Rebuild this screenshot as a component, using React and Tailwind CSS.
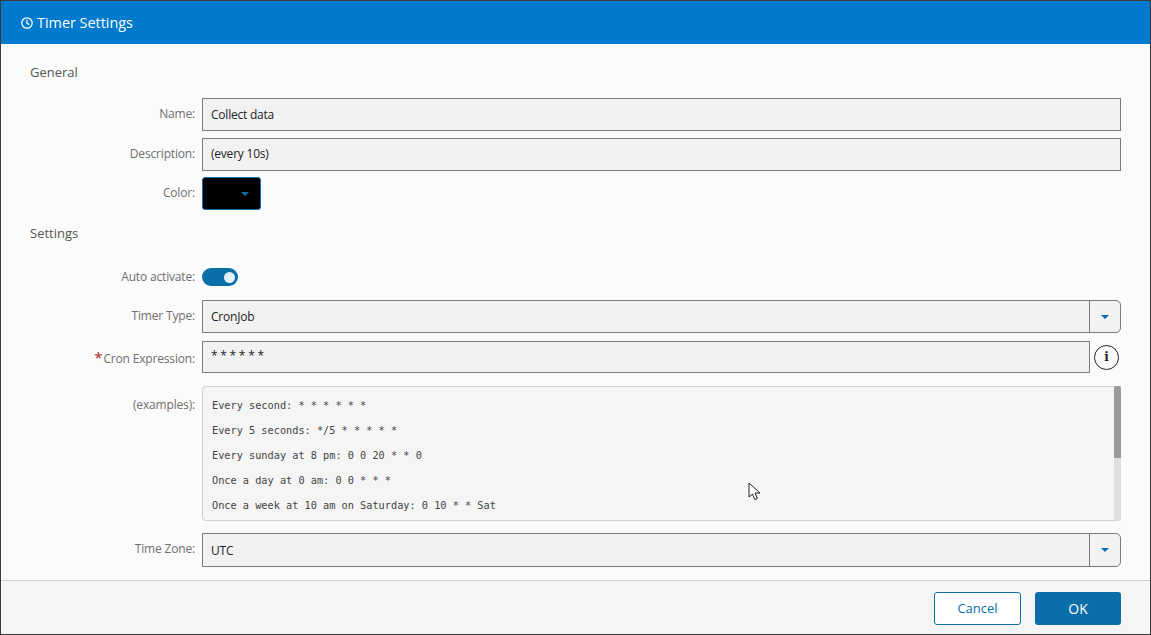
import React from "react";

const Caret = ({ className = "" }) => (
  <svg width="10" height="6" viewBox="0 0 10 6" className={className}><path d="M0 0.5h10L5 5.5z" fill="#0a6ea8" /></svg>
);

const Row = ({ label, required, top, children, className = "" }) => (
  <div className={`flex ${className}`}>
    <div className={`w-[194px] shrink-0 text-right text-[12px] tracking-[-0.17px] leading-[16px] text-[#6f6f6f] ${top}`}>
      {required && <span className="text-[#a4262c] text-[15px] leading-[10px] mr-[1px]">*</span>}
      {label}
    </div>
    <div className="ml-[7px] flex-1 min-w-0">{children}</div>
  </div>
);

const inputCls = "w-full border border-[#7a7a7a] bg-[#f2f2f2] pl-2 text-[12px] tracking-[-0.22px] text-[#222] flex items-center";

const Select = ({ value, h, textCls = "" }) => (
  <div className={`flex border border-[#7a7a7a] rounded-r-[5px] bg-[#f2f2f2] ${h}`}>
    <div className={`flex-1 pl-2 flex items-center text-[12px] tracking-[-0.22px] text-[#222] ${textCls}`}>{value}</div>
    <div className="w-[31px] border-l border-[#7a7a7a] flex items-center justify-center"><Caret className="w-[8px]" /></div>
  </div>
);

const examples = [
  "Every second: * * * * * *",
  "Every 5 seconds: */5 * * * * *",
  "Every sunday at 8 pm: 0 0 20 * * 0",
  "Once a day at 0 am: 0 0 * * *",
  "Once a week at 10 am on Saturday: 0 10 * * Sat",
];

export default function App() {
  return (
    <div className="relative w-[1151px] h-[635px] overflow-hidden border border-[#3a3a3a] bg-[#fbfbfb] flex flex-col font-['Open_Sans',sans-serif]">
      <div className="h-[43px] shrink-0 bg-[#007acc] flex items-center pl-[20px] text-white text-[14.4px]">
        <svg width="12" height="12" viewBox="0 0 12 12" fill="none" stroke="white" strokeWidth="1.3" className="mr-[4px]">
          <circle cx="6" cy="6" r="5.2" />
          <path d="M6 2.8V6.2L8.2 7.6" />
        </svg>
        Timer Settings
      </div>

      <div className="flex-1 min-h-0 pl-[29px] pr-[29px]">
        <div className="h-[54px] pt-[19px] text-[13px] leading-[18px] text-[#555]">General</div>

        <Row label="Name:" top="pt-[8px]" className="-ml-[29px]">
          <div className={`${inputCls} h-[33px]`}>Collect data</div>
        </Row>
        <Row label="Description:" top="pt-[8px]" className="-ml-[29px] mt-[7px]">
          <div className={`${inputCls} h-[33px]`}><span className="-mt-[1px]">(every 10s)</span></div>
        </Row>
        <Row label="Color:" top="pt-[8px]" className="-ml-[29px] mt-[6px]">
          <div className="w-[59px] h-[33px] bg-black border border-[#0a6ea8] rounded-[3px] flex items-center justify-end pr-[11px]">
            <Caret className="w-[8px]" />
          </div>
        </Row>

        <div className="h-[58px] pt-[14px] text-[13px] leading-[18px] text-[#555]">Settings</div>

        <Row label="Auto activate:" top="pt-[1px]" className="-ml-[29px]">
          <div className="w-[36px] h-[18px] rounded-full bg-[#0a6ea8] flex items-center justify-end pr-[3px]">
            <div className="w-[11px] h-[11px] rounded-full bg-[#e6f0f7]" />
          </div>
        </Row>
        <Row label="Timer Type:" top="pt-[8px]" className="-ml-[29px] mt-[14px]">
          <Select value="CronJob" h="h-[33px]" />
        </Row>
        <Row label="Cron Expression:" required top="pt-[10px]" className="-ml-[29px] mt-[8px]">
          <div className="flex items-center">
            <div className={`${inputCls} h-[32px] flex-1 min-w-0`}><span className="-mt-[3px]">* * * * * *</span></div>
            <div className="ml-[4px] mr-[2px] w-[25px] h-[25px] rounded-full border border-[#222] flex items-center justify-center text-[12px] font-bold text-[#222] font-['DejaVu_Serif',serif]">i</div>
          </div>
        </Row>
        <Row label="(examples):" top="pt-[11px]" className="-ml-[29px] mt-[13px]">
          <div className="relative h-[135px] border border-[#cfcfcf] rounded-[4px] bg-[#f5f5f5] pl-[9px] pt-[11px] font-['DejaVu_Sans_Mono',monospace] text-[10.25px] leading-[15px] text-[#444]">
            {examples.map((e) => (
              <div key={e} className="mb-[10px] whitespace-pre">{e}</div>
            ))}
            <div className="absolute -right-[1px] -top-[1px] -bottom-[1px] w-[7px] bg-[#dedede] rounded-[2px] overflow-hidden">
              <div className="h-[72px] bg-[#9a9a9a]" />
            </div>
          </div>
        </Row>
        <Row label="Time Zone:" top="pt-[8px]" className="-ml-[29px] mt-[12px]">
          <Select value="UTC" h="h-[34px]" textCls="pt-[1px]" />
        </Row>
      </div>

      <div className="h-[54px] shrink-0 border-t border-[#d0d0d0] bg-[#f5f5f5] flex justify-end items-start pt-[11px] pr-[29px] text-[14px]">
        <div className="w-[87px] h-[33px] border border-[#0a6ea8] rounded-[3px] bg-white text-[#0a6ea8] flex items-center justify-center text-[13px]">Cancel</div>
        <div className="ml-[14px] w-[86px] h-[33px] rounded-[3px] bg-[#0a6ea8] text-white flex items-center justify-center">OK</div>
      </div>

      <svg width="14" height="20" viewBox="0 0 14 20" className="absolute left-[747px] top-[481px]">
        <path d="M1 1V15L4.4 12L6.8 17.6L9.4 16.4L7 11H12z" fill="white" stroke="#222" strokeWidth="1" />
      </svg>
    </div>
  );
}
